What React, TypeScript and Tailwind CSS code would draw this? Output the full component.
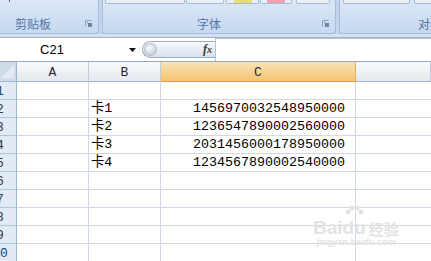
import React from 'react'

const ROWS = [
  { n: 1, b: '', c: '' },
  { n: 2, b: '卡1', c: '1456970032548950000' },
  { n: 3, b: '卡2', c: '1236547890002560000' },
  { n: 4, b: '卡3', c: '2031456000178950000' },
  { n: 5, b: '卡4', c: '1234567890002540000' },
  { n: 6, b: '', c: '' },
  { n: 7, b: '', c: '' },
  { n: 8, b: '', c: '' },
  { n: 9, b: '', c: '' },
  { n: 10, b: '', c: '' },
]

const mono = { fontFamily: '"Liberation Mono", monospace' }
const cjk = { fontFamily: '"Noto Sans CJK SC", "Noto Sans", sans-serif' }

const Launcher = () => (
  <svg width="7" height="7" viewBox="0 0 7 7">
    <path d="M0.5 6.5V0.5H6.5" stroke="#8ea3bf" fill="none" />
    <rect x="3" y="3" width="4" height="4" fill="#6f86a6" />
    <path d="M2 2L4.5 4.5" stroke="#5d7496" />
  </svg>
)

const TopBox = ({ ml, w, swatch }: { ml: number; w: number; swatch?: string }) => (
  <div
    className="h-[4px] shrink-0 border border-t-0 border-[#a6bbd6] rounded-b-[2px] bg-[#e9f0f9] flex justify-center"
    style={{ marginLeft: ml, width: w }}
  >
    {swatch && <div className="h-[3px] w-[18px]" style={{ background: swatch }} />}
  </div>
)

const Ribbon = () => (
  <div className="h-[38px] bg-[#d3e1f2] border-b border-[#a2b3c8] flex flex-col">
    <div className="h-[34px] flex bg-[#c3d5ec]">
      {/* clipboard group */}
      <div className="w-[99px] shrink-0 h-full border-r border-b border-[#a6bcd8] rounded-br-[3px] bg-gradient-to-b from-[#dbe7f6] to-[#c6d9f0] flex flex-col">
        <div className="h-[15px] pl-[9px]">
          <div className="w-[1px] h-[2px] bg-[#55647a]" />
        </div>
        <div className="flex items-center h-[18px] pl-[15px] pr-[6px]">
          <span className="text-[12px] leading-[12px] text-[#5275a6]" style={cjk}>剪贴板</span>
          <span className="ml-auto -mt-[2px]"><Launcher /></span>
        </div>
      </div>
      {/* font group */}
      <div className="w-[234px] shrink-0 ml-[3px] h-full border border-t-0 border-[#a6bcd8] rounded-b-[3px] bg-gradient-to-b from-[#dbe7f6] to-[#c6d9f0] flex flex-col">
        <div className="h-[15px] flex">
          <TopBox ml={2} w={80} />
          <TopBox ml={1} w={38} />
          <TopBox ml={2} w={33} swatch="#e6dd74" />
          <TopBox ml={1} w={32} swatch="#f2a3b2" />
          <TopBox ml={4} w={34} />
        </div>
        <div className="flex items-center h-[18px] pl-[94px] pr-[6px]">
          <span className="text-[12px] leading-[12px] text-[#5275a6]" style={cjk}>字体</span>
          <span className="ml-auto -mt-[2px]"><Launcher /></span>
        </div>
      </div>
      {/* alignment group */}
      <div className="flex-1 min-w-0 overflow-hidden ml-[3px] h-full border-l border-b border-[#a6bcd8] rounded-bl-[3px] bg-gradient-to-b from-[#dbe7f6] to-[#c6d9f0] flex flex-col">
        <div className="h-[15px] flex">
          <TopBox ml={3} w={67} />
          <TopBox ml={4} w={30} />
        </div>
        <div className="flex items-center h-[18px] pl-[78px]">
          <span className="shrink-0 text-[12px] leading-[12px] text-[#5275a6] whitespace-nowrap" style={cjk}>对齐方式</span>
        </div>
      </div>
    </div>
  </div>
)

const FormulaBar = () => (
  <div className="h-[24px] bg-white border-b border-[#9aa9bd] flex items-center">
    <div className="w-[142px] shrink-0 flex items-center">
      <span
        className="w-[104px] text-center text-[13px] leading-[14px] text-black"
        style={{ fontFamily: '"Liberation Sans", Arial, sans-serif' }}
      >
        C21
      </span>
      <svg className="ml-[25px]" width="7" height="4" viewBox="0 0 7 4">
        <path d="M0 0H7L3.5 4Z" fill="#111" />
      </svg>
    </div>
    <div className="w-[73px] shrink-0 h-[17px] rounded-l-full border border-r-0 border-[#9cadc3] bg-gradient-to-b from-[#f7f9fc] to-[#d8e1ed] flex items-center">
      <div className="ml-[1px] w-[13px] h-[13px] rounded-full border border-[#b4bfcc] bg-[radial-gradient(circle_at_40%_35%,#ffffff,#c8d0da_70%,#a9b3c0)]" />
      <span
        className="ml-auto mr-[3px] text-[12px] leading-[12px] italic font-bold text-[#3b3b3b]"
        style={{ fontFamily: '"Liberation Serif", serif' }}
      >
        f<span className="text-[10px]">x</span>
      </span>
    </div>
    <div className="flex-1 h-full border-l border-t border-[#b7c4d5]" />
  </div>
)

const HeaderCell = ({ w, label, active }: { w?: number; label: string; active?: boolean }) => (
  <div
    className={
      active
        ? 'h-full shrink-0 border-r border-b border-r-[#e2ae5a] border-b-[#f29d36] bg-gradient-to-b from-[#fae3b8] to-[#f3c46e] flex items-center justify-center'
        : 'h-full shrink-0 border-r border-b border-r-[#c4ccd7] border-b-[#9eb6ce] bg-gradient-to-b from-[#f9fafc] to-[#e3e8ee] flex items-center justify-center'
    }
    style={w ? { width: w } : { flex: 1 }}
  >
    <span className="text-[13px] leading-[14px] text-[#1d2a3a] pt-[2px]" style={mono}>
      {label}
    </span>
  </div>
)

const Grid = () => (
  <div className="relative">
    <div className="h-[20px] flex">
      <div className="w-[17px] shrink-0 h-full border-r border-b border-[#9eb6ce] bg-[#d0dbe8] flex items-end justify-end">
        <svg width="15" height="15" viewBox="0 0 15 15" className="mb-[2px] mr-[1px]">
          <path d="M14 1V14H1Z" fill="#e4eaf2" />
        </svg>
      </div>
      <HeaderCell w={72} label="A" />
      <HeaderCell w={72} label="B" />
      <HeaderCell w={195} label="C" active />
      <HeaderCell label="" />
    </div>
    {ROWS.map((r) => (
      <div key={r.n} className="h-[18px] flex">
        <div className="w-[17px] shrink-0 h-full overflow-hidden border-r border-b border-r-[#9eb6ce] border-b-[#b3c4d9] bg-[#e2eaf5] flex items-end">
          <div className="w-[34px] -ml-[17px] shrink-0 text-center text-[13px] leading-[15px] text-[#2a3b52]" style={mono}>
            {r.n}
          </div>
        </div>
        <div className="w-[72px] shrink-0 h-full border-r border-b border-[#d0d7e5]" />
        <div className="w-[72px] shrink-0 h-full border-r border-b border-[#d0d7e5] flex items-end pl-[2px]">
          <span className="text-[13.3px] leading-[16px] text-black whitespace-nowrap">
            <span style={cjk}>{r.b.slice(0, 1)}</span>
            <span style={mono}>{r.b.slice(1)}</span>
          </span>
        </div>
        <div className="w-[195px] shrink-0 h-full border-r border-b border-[#d0d7e5] flex items-end justify-end pr-[10px]">
          <span className="text-[13.33px] leading-[16px] text-black" style={mono}>
            {r.c}
          </span>
        </div>
        <div className="flex-1 h-full border-b border-[#d0d7e5]" />
      </div>
    ))}
    {/* watermark */}
    <div className="absolute left-[313px] top-[156px] flex flex-col items-center text-[#e3e3e3] pointer-events-none">
      <div className="flex items-end">
        <span className="text-[19px] leading-[19px] font-bold" style={{ fontFamily: '"Liberation Sans", sans-serif' }}>
          Bai
        </span>
        <span className="relative text-[19px] leading-[19px] font-bold" style={{ fontFamily: '"Liberation Sans", sans-serif' }}>
          du
          <svg className="absolute left-[1px] -top-[13px]" width="20" height="14" viewBox="0 0 20 14">
            <circle cx="4" cy="7" r="2.5" fill="#e3e3e3" />
            <circle cx="8" cy="3" r="2.5" fill="#e3e3e3" />
            <circle cx="13" cy="3" r="2.5" fill="#e3e3e3" />
            <circle cx="17" cy="7" r="2.5" fill="#e3e3e3" />
          </svg>
        </span>
        <span className="ml-[3px] text-[15px] leading-[17px] font-bold" style={cjk}>经验</span>
      </div>
      <span className="text-[9px] leading-[11px] font-bold" style={{ fontFamily: '"Liberation Sans", sans-serif' }}>
        jingyan.baidu.com
      </span>
    </div>
  </div>
)

export default function App() {
  return (
    <div className="w-[431px] h-[261px] overflow-hidden bg-white">
      <Ribbon />
      <FormulaBar />
      <Grid />
    </div>
  )
}
